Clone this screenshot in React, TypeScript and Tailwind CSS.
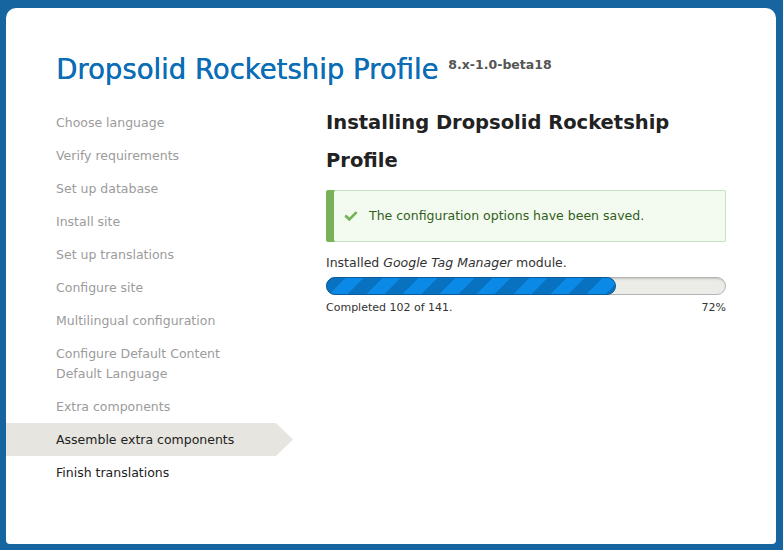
import React from "react";

const steps: { label: string[]; state: "done" | "active" | "todo" }[] = [
  { label: ["Choose language"], state: "done" },
  { label: ["Verify requirements"], state: "done" },
  { label: ["Set up database"], state: "done" },
  { label: ["Install site"], state: "done" },
  { label: ["Set up translations"], state: "done" },
  { label: ["Configure site"], state: "done" },
  { label: ["Multilingual configuration"], state: "done" },
  { label: ["Configure Default Content", "Default Language"], state: "done" },
  { label: ["Extra components"], state: "done" },
  { label: ["Assemble extra components"], state: "active" },
  { label: ["Finish translations"], state: "todo" },
];

function Check() {
  return (
    <svg width="14" height="14" viewBox="0 0 16 16" className="shrink-0">
      <path
        fill="#73b355"
        d="M6.464 13.676c-.194.194-.513.194-.707 0l-4.96-4.955c-.194-.193-.194-.513 0-.707l1.405-1.407c.194-.195.512-.195.707 0l2.849 2.848c.194.193.513.193.707 0l6.629-6.626c.195-.194.514-.194.707 0l1.404 1.404c.193.194.193.513 0 .707l-8.741 8.736z"
      />
    </svg>
  );
}

export default function App() {
  const done = 102;
  const total = 141;
  const pct = (done / total) * 100;
  return (
    <div
      className="w-full h-[550px] bg-[#1765a0] pt-[8px] pl-[6px] overflow-hidden"
      style={{ fontFamily: '"DejaVu Sans", "Liberation Sans", sans-serif' }}
    >
      <div className="w-[770px] h-[536px] bg-white rounded-t-[10px] rounded-b-[4px] pt-[45px]">
        <div className="flex items-start pl-[50px]">
          <h1 className="text-[27.5px] leading-[32px] font-normal text-[#0b6db5] [text-shadow:0.4px_0_0_#0b6db5]">
            Dropsolid Rocketship Profile
          </h1>
          <span className="ml-[10px] mt-[4px] text-[12.5px] leading-[16px] font-bold text-[#555]">
            8.x-1.0-beta18
          </span>
        </div>

        <div className="flex mt-[19px]">
          <ol className="w-[287px] pt-[2px] text-[12.5px] leading-5">
            {steps.map((s, i) =>
              s.state === "active" ? (
                <li key={i} className="flex">
                  <div className="w-[270px] bg-[#e6e5df] pl-[50px] py-[6.5px] text-[#222]">
                    {s.label.map((l) => (
                      <div key={l}>{l}</div>
                    ))}
                  </div>
                  <svg width="17" height="33" viewBox="0 0 17 33" className="shrink-0">
                    <path d="M0 0 L17 16.5 L0 33 Z" fill="#e6e5df" />
                  </svg>
                </li>
              ) : (
                <li
                  key={i}
                  className={
                    "w-[270px] pl-[50px] py-[6.5px] " +
                    (s.state === "done" ? "text-[#9b9b9b]" : "text-[#222]")
                  }
                >
                  {s.label.map((l) => (
                    <div key={l}>{l}</div>
                  ))}
                </li>
              )
            )}
          </ol>

          <div className="ml-[33px] w-[400px]">
            <h2 className="text-[19.5px] leading-[38px] font-bold text-[#222]">
              Installing Dropsolid Rocketship Profile
            </h2>

            <div className="mt-[10px] ml-[8px] shadow-[-8px_0_0_#77b259] border border-l-0 border-[#c9e1bd] rounded-[2px] bg-[#f3faef] py-[15px] pl-[10px] pr-[20px] flex items-center gap-[11px] text-[12.5px] leading-5 text-[#325e1c]">
              <Check />
              <span>The configuration options have been saved.</span>
            </div>

            <div className="mt-[11px] text-[12.5px] leading-5 text-[#333]">
              Installed <em>Google Tag Manager</em> module.
            </div>

            <div className="mt-[4px] h-[18px] rounded-full border border-[#b4b4b4] bg-[#ebebe7] shadow-[inset_0_3px_3px_-3px_#999] flex">
              <div
                className="h-[18px] -my-px -ml-px rounded-full border border-[#0b5c9c] bg-[#0872c0] bg-[image:repeating-linear-gradient(135deg,#0872c0_0px,#0872c0_13px,#0a8ae6_13px,#0a8ae6_26px)]"
                style={{ width: `calc(${pct.toFixed(1)}% + 2px)` }}
              />
            </div>

            <div className="mt-[5px] flex justify-between text-[11px] leading-4 text-[#333]">
              <span>
                Completed {done} of {total}.
              </span>
              <span>{Math.round(pct)}%</span>
            </div>
          </div>
        </div>
      </div>
    </div>
  );
}
